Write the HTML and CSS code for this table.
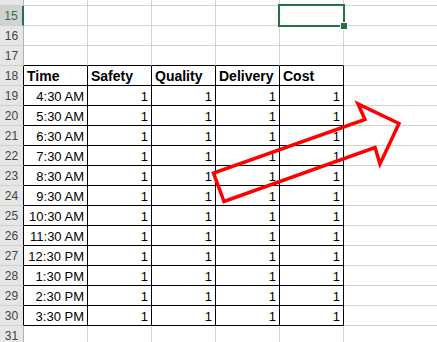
FILE: index.html
```html
<!DOCTYPE html>
<html>
<head>
<meta charset="utf-8">
<link rel="stylesheet" href="styles.css">
</head>
<body>
<div class="page">
<div class="sheet">
  <div class="rh">14</div><div class="c"></div><div class="c"></div><div class="c"></div><div class="c"></div><div class="c"></div><div class="c g"></div>
  <div class="rh sel">15</div><div class="c"></div><div class="c"></div><div class="c"></div><div class="c"></div><div class="c active"><div class="selbox"></div><div class="handle"></div></div><div class="c g"></div>
  <div class="rh">16</div><div class="c"></div><div class="c"></div><div class="c"></div><div class="c"></div><div class="c"></div><div class="c g"></div>
  <div class="rh">17</div><div class="c above"></div><div class="c above"></div><div class="c above"></div><div class="c above"></div><div class="c above"></div><div class="c g"></div>
  <div class="rh tr">18</div><div class="c t hd">Time</div><div class="c t hd">Safety</div><div class="c t hd">Quality</div><div class="c t hd">Delivery</div><div class="c t hd">Cost</div><div class="c g"></div>
  <div class="rh tr">19</div><div class="c t n">4:30 AM</div><div class="c t n">1</div><div class="c t n">1</div><div class="c t n">1</div><div class="c t n">1</div><div class="c g"></div>
  <div class="rh tr">20</div><div class="c t n">5:30 AM</div><div class="c t n">1</div><div class="c t n">1</div><div class="c t n">1</div><div class="c t n">1</div><div class="c g"></div>
  <div class="rh tr">21</div><div class="c t n">6:30 AM</div><div class="c t n">1</div><div class="c t n">1</div><div class="c t n">1</div><div class="c t n">1</div><div class="c g"></div>
  <div class="rh tr">22</div><div class="c t n">7:30 AM</div><div class="c t n">1</div><div class="c t n">1</div><div class="c t n">1</div><div class="c t n">1</div><div class="c g"></div>
  <div class="rh tr">23</div><div class="c t n">8:30 AM</div><div class="c t n">1</div><div class="c t n">1</div><div class="c t n">1</div><div class="c t n">1</div><div class="c g"></div>
  <div class="rh tr">24</div><div class="c t n">9:30 AM</div><div class="c t n">1</div><div class="c t n">1</div><div class="c t n">1</div><div class="c t n">1</div><div class="c g"></div>
  <div class="rh tr">25</div><div class="c t n">10:30 AM</div><div class="c t n">1</div><div class="c t n">1</div><div class="c t n">1</div><div class="c t n">1</div><div class="c g"></div>
  <div class="rh tr">26</div><div class="c t n">11:30 AM</div><div class="c t n">1</div><div class="c t n">1</div><div class="c t n">1</div><div class="c t n">1</div><div class="c g"></div>
  <div class="rh tr">27</div><div class="c t n">12:30 PM</div><div class="c t n">1</div><div class="c t n">1</div><div class="c t n">1</div><div class="c t n">1</div><div class="c g"></div>
  <div class="rh tr">28</div><div class="c t n">1:30 PM</div><div class="c t n">1</div><div class="c t n">1</div><div class="c t n">1</div><div class="c t n">1</div><div class="c g"></div>
  <div class="rh tr">29</div><div class="c t n">2:30 PM</div><div class="c t n">1</div><div class="c t n">1</div><div class="c t n">1</div><div class="c t n">1</div><div class="c g"></div>
  <div class="rh tr">30</div><div class="c t n">3:30 PM</div><div class="c t n">1</div><div class="c t n">1</div><div class="c t n">1</div><div class="c t n">1</div><div class="c g"></div>
  <div class="rh">31</div><div class="c"></div><div class="c"></div><div class="c"></div><div class="c"></div><div class="c"></div><div class="c g"></div>
</div>
<svg class="arrow" width="437" height="342" viewBox="0 0 437 342">
  <polygon points="224,201.5 213.5,173 365,119.5 358,104 399,123.5 380,164 375,147.5" fill="none" stroke="#ff0000" stroke-width="3.5" stroke-linejoin="miter"/>
</svg>
</div>
</body>
</html>
```

FILE: styles.css
```css
html, body {
  margin: 0;
  padding: 0;
  background: #ffffff;
  overflow: hidden;
}
.page {
  position: relative;
  width: 437px;
  height: 342px;
  overflow: hidden;
}
.sheet {
  display: grid;
  grid-template-columns: 24px 64px 64px 64px 64px 64px 1fr;
  grid-auto-rows: 20px;
  margin-top: -14px;
  font-family: "Liberation Sans", Arial, sans-serif;
  font-size: 13px;
  color: #000;
}
.rh {
  box-sizing: border-box;
  background: #e6e6e6;
  border-right: 1px solid #b1b1b1;
  border-bottom: 1px solid #d0d0d0;
  color: #444444;
  font-size: 12px;
  line-height: 15px;
  display: flex;
  align-items: flex-end;
  justify-content: center;
  padding-bottom: 1px;
}
.rh.sel {
  background: #d2d2d2;
  color: #217346;
  border-right: 2px solid #217346;
}
.rh.tr {
  border-right-color: #000;
}
.c {
  box-sizing: border-box;
  border-right: 1px solid #d4d4d4;
  border-bottom: 1px solid #d4d4d4;
  line-height: 15px;
  display: flex;
  align-items: flex-end;
  padding: 0 3px 1px 3px;
  white-space: nowrap;
}
.c.g {
  border-right: none;
}
.c.above {
  border-bottom-color: #000;
}
.c.t {
  border-right-color: #000;
  border-bottom-color: #000;
}
.hd {
  font-weight: bold;
  font-size: 14px;
}
.n {
  justify-content: flex-end;
}
.active {
  position: relative;
}
.selbox {
  position: absolute;
  left: -2px;
  top: -2px;
  width: 67px;
  height: 23px;
  box-sizing: border-box;
  border: 2px solid #217346;
}
.handle {
  position: absolute;
  left: 61px;
  top: 17px;
  width: 6px;
  height: 6px;
  background: #217346;
  box-shadow: 0 0 0 1px #ffffff;
}
.arrow {
  position: absolute;
  left: 0;
  top: 0;
}
```
